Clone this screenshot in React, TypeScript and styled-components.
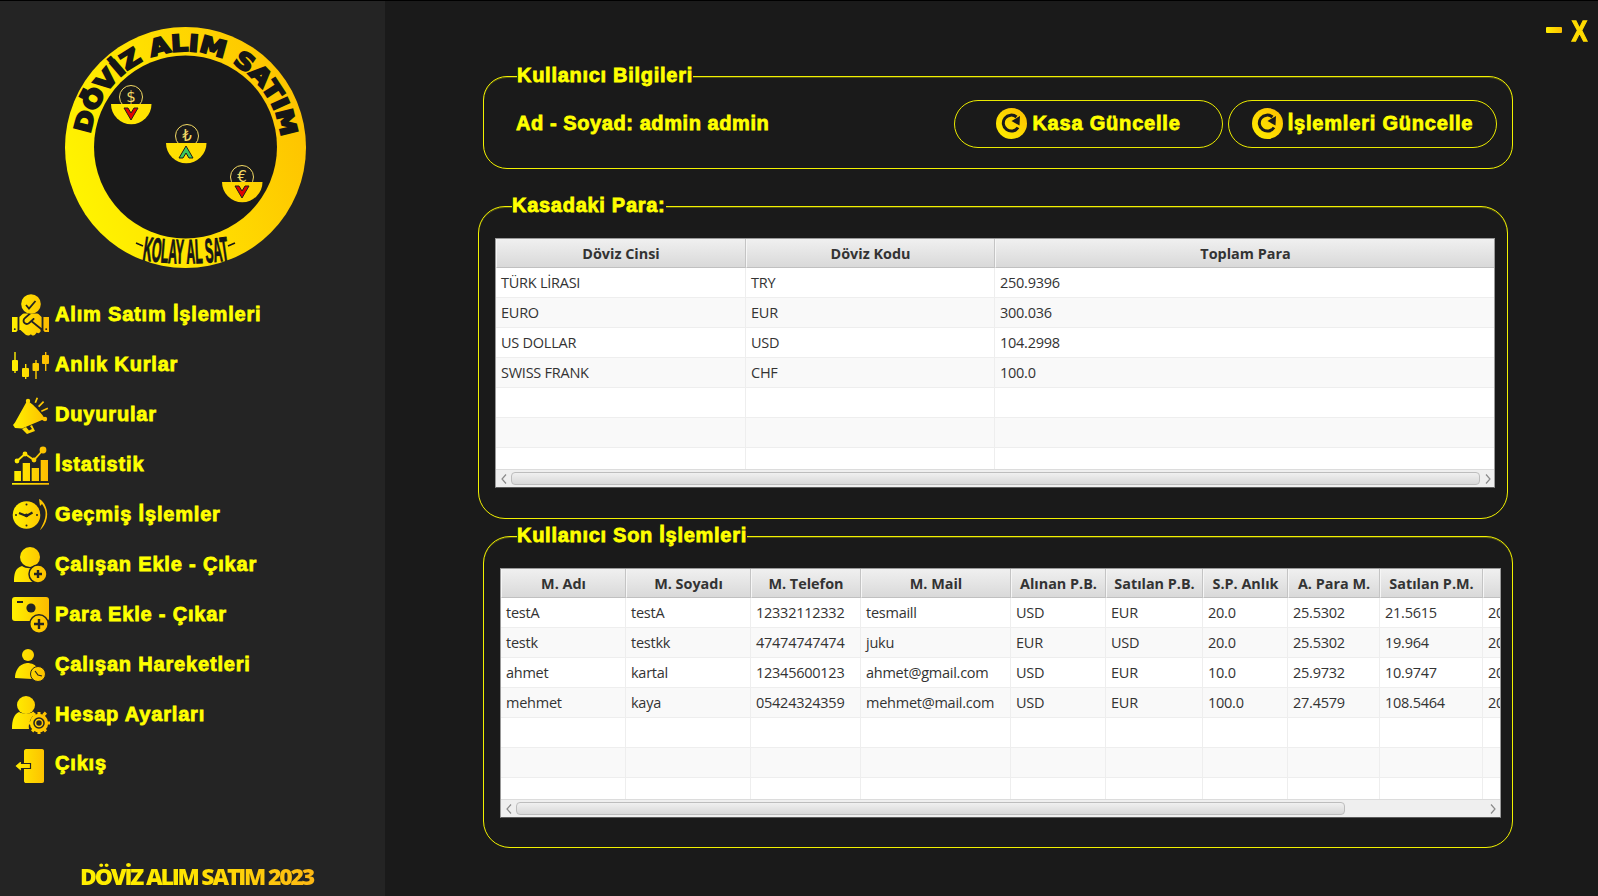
import React from "react";
import styled, { createGlobalStyle } from "styled-components";
import { FaHandshake } from "react-icons/fa";

const Global = createGlobalStyle`
  html, body { margin: 0; padding: 0; width: 1598px; height: 896px; overflow: hidden; background: #1a1a1a; }
  #root { width: 1598px; height: 896px; }
  * { box-sizing: border-box; }
`;

const HEAVY = `"Liberation Sans", Arial, sans-serif`;
const UI = `"Open Sans", "Noto Sans", sans-serif`;
const YELLOW = "#ffff00";

const Shell = styled.div`
  display: flex;
  width: 1598px;
  height: 896px;
  border-top: 1px solid #000;
  background: #1a1a1a;
`;
const Sidebar = styled.aside`
  width: 385px;
  height: 100%;
  flex: none;
  background: #242424;
  padding-top: 26px;
  display: flex;
  flex-direction: column;
`;
const LogoBox = styled.div`
  margin-left: 65px;
  width: 241px;
  height: 241px;
  flex: none;
`;
const Menu = styled.nav`
  margin-top: 22px;
  display: flex;
  flex-direction: column;
`;
const MenuItem = styled.div`
  height: 49.9px;
  display: flex;
  align-items: center;
  padding-left: 12px;
  gap: 6px;
`;
const MenuLabel = styled.span`
  font: bold 20px ${HEAVY};
  letter-spacing: 0.82px;
  color: ${YELLOW};
  -webkit-text-stroke: 0.8px ${YELLOW};
  white-space: nowrap;
`;
const Footer = styled.div`
  margin-top: auto;
  margin-left: 80px;
  margin-bottom: 4px;
  font: 800 23px "Open Sans", sans-serif;
  letter-spacing: -2.2px;
  width: fit-content;
  padding-right: 3px;
  white-space: nowrap;
  background: linear-gradient(90deg, #ffef00 0%, #ffe800 40%, #fdb714 100%);
  -webkit-background-clip: text;
  background-clip: text;
  color: transparent;
`;
const Main = styled.main`
  flex: 1;
  display: flex;
  flex-direction: column;
`;
const TopBar = styled.div`
  height: 75px;
  flex: none;
  display: flex;
  justify-content: flex-end;
  align-items: flex-start;
  padding: 19px 10px 0 0;
  gap: 8px;
`;
const MinimizeGlyph = styled.div`
  width: 16px;
  height: 6px;
  margin-top: 7px;
  border-radius: 1px;
  background: linear-gradient(90deg, #ffee00, #fdbf00);
`;
const CloseGlyph = styled.div`
  font: bold 29px ${HEAVY};
  line-height: 23px;
  width: 18px;
  height: 23px;
  text-align: center;
  color: #ffdc00;
  -webkit-text-stroke: 1.4px #ffdc00;
  transform: scaleX(0.8);
`;
const Panel = styled.section<{ $left: number; $height: number; $top: number; $radius: number }>`
  position: relative;
  width: 1030px;
  height: ${(p) => p.$height}px;
  margin-left: ${(p) => p.$left}px;
  margin-top: ${(p) => p.$top}px;
  flex: none;
  border: 1.5px solid #f2f200;
  box-shadow: inset 0 1px 0 rgba(255,255,0,0.25);
  border-radius: ${(p) => p.$radius}px;
`;
const PanelTitle = styled.h2`
  position: absolute;
  left: 33px;
  top: -13px;
  margin: 0;
  background: #1a1a1a;
  font: bold 20px/22px ${HEAVY};
  letter-spacing: 0.72px;
  color: ${YELLOW};
  -webkit-text-stroke: 0.8px ${YELLOW};
  white-space: nowrap;
`;
const InfoRow = styled.div`
  height: 100%;
  display: flex;
  align-items: center;
  padding: 2px 15px 0 32px;
  gap: 5px;
`;
const UserName = styled.div`
  margin-right: auto;
  font: bold 20px ${HEAVY};
  letter-spacing: 0.58px;
  color: ${YELLOW};
  -webkit-text-stroke: 0.8px ${YELLOW};
  white-space: nowrap;
`;
const ActionButton = styled.button`
  width: 269px;
  height: 48px;
  flex: none;
  border: 1.5px solid #eaea00;
  border-radius: 24px;
  background: transparent;
  display: flex;
  align-items: center;
  justify-content: center;
  gap: 5px;
  padding: 0;
  font: bold 20px ${HEAVY};
  letter-spacing: 0.8px;
  color: ${YELLOW};
  -webkit-text-stroke: 0.8px ${YELLOW};
  white-space: nowrap;
`;
const TableFrame = styled.div<{ $width: number; $mt: number }>`
  width: ${(p) => p.$width}px;
  height: 250px;
  margin: ${(p) => p.$mt}px 0 0 16px;
  background: #fff;
  border: 1px solid #9a9a9a;
  border-bottom-color: #5c5c5c;
  overflow: hidden;
  display: flex;
  flex-direction: column;
`;
const TableBody = styled.div`
  flex: 1;
  height: 230px;
  overflow: hidden;
`;
const DataTable = styled.table`
  table-layout: fixed;
  border-collapse: separate;
  border-spacing: 0;
  font: 14.5px ${UI};
  color: #333;
`;
const HeadCell = styled.th`
  height: 29px;
  padding: 0;
  font: 700 14.4px ${UI};
  color: #333;
  text-align: center;
  background: linear-gradient(#f0f0f0, #d9d9d9);
  border-right: 1px solid #c4c4c4;
  border-left: 1px solid #f6f6f6;
  border-bottom: 1px solid #c0c0c0;
  white-space: nowrap;
  overflow: hidden;
`;
const BodyRow = styled.tr<{ $odd: boolean }>`
  background: ${(p) => (p.$odd ? "#f9f9f9" : "#fff")};
`;
const BodyCell = styled.td`
  height: 30px;
  padding: 0 0 1px 5px;
  letter-spacing: -0.25px;
  border-right: 1px solid #eeeeee;
  border-bottom: 1px solid #eeeeee;
  white-space: nowrap;
  overflow: hidden;
`;
const ScrollBar = styled.div`
  height: 18px;
  flex: none;
  display: flex;
  align-items: center;
  background: #efefef;
  border-top: 1px solid #dcdcdc;
`;
const ScrollArrow = styled.div`
  width: 15px;
  flex: none;
  display: flex;
  justify-content: center;
  align-items: center;
`;
const ScrollTrack = styled.div`
  flex: 1;
  height: 100%;
  display: flex;
  align-items: center;
`;
const ScrollThumb = styled.div`
  height: 13px;
  border: 1px solid #bdbdbd;
  border-radius: 4px;
  background: linear-gradient(#f0f0f0, #d8d8d8);
`;

const Icon: React.FC<{ id: string; children: React.ReactNode }> = ({ id, children }) => (
  <svg width="37" height="44" viewBox="0 0 37 44" style={{ flex: "none", overflow: "visible" }}>
    <defs>
      <linearGradient id={id} gradientUnits="userSpaceOnUse" x1="0" y1="0" x2="37" y2="0">
        <stop offset="0" stopColor="#fff200" />
        <stop offset="1" stopColor="#fdbb00" />
      </linearGradient>
      <linearGradient id={`${id}b`} x1="0" y1="0" x2="1" y2="0">
        <stop offset="0" stopColor="#fff200" />
        <stop offset="1" stopColor="#fdbb00" />
      </linearGradient>
    </defs>
    <g fill={`url(#${id})`} stroke="none">{children}</g>
  </svg>
);

const DARK = "#242424";

const icons: Record<string, React.ReactNode> = {
  handshake: (
    <Icon id="i1">
      <circle cx="19" cy="11" r="9.800" />
      <path d="M14 12l3 3.500 6.500-7.500" stroke={DARK} strokeWidth="1.800" fill="none" />
      <FaHandshake size={37} x={0} y={13} fill="url(#i1b)" />
    </Icon>
  ),
  candles: (
    <Icon id="i2">
      <path d="M2.300 9h1.400v21H2.300z M13 21h1.400v15H13z M23.300 17h1.400v19h-1.400z M33 9h1.400v19H33z" />
      <rect x="0" y="17" width="6" height="11" rx="1" />
      <rect x="10" y="25" width="7" height="9" rx="1" />
      <rect x="20.500" y="20" width="6.500" height="8" rx="1" />
      <rect x="30" y="12" width="7" height="9" rx="1" />
    </Icon>
  ),
  megaphone: (
    <Icon id="i3">
      <path d="M15 8l18 18-3 1-20 8.500-7-.5-2-3 2-2.500z" />
      <path d="M15 8c3 0 15 12 18 18-1 2-2 1-3 1z" />
      <path d="M10 36l5 5 8-3-3-6-2 1 2 3-3 1.600-3-3.600z" />
      <circle cx="16" cy="8" r="2.200" />
      <circle cx="33" cy="26" r="2.200" />
      <path d="M22.500 9.500l2-5 1.600.6-2 5z M26 13l5-5 1.200 1.200-5 5z M29 17.500l6.500-3 .7 1.500-6.500 3z" />
    </Icon>
  ),
  stats: (
    <Icon id="i4">
      <rect x="0" y="40" width="37" height="1.700" />
      <rect x="2.300" y="28" width="6.700" height="10" />
      <rect x="10.700" y="20" width="7.300" height="18" />
      <rect x="19.700" y="25" width="7.300" height="13" />
      <rect x="28.700" y="17" width="7.300" height="21" />
      <path d="M5 18l8-7 9 6 9-10" fill="none" stroke="url(#i4)" strokeWidth="1.800" />
      <circle cx="5" cy="18" r="2.400" />
      <circle cx="13" cy="11" r="2.400" />
      <circle cx="22" cy="17" r="2.400" />
      <circle cx="31" cy="7" r="3.400" />
    </Icon>
  ),
  clock: (
    <Icon id="i5">
      <circle cx="14.500" cy="22" r="13.800" />
      <path d="M7 20l7.500 3 6-3.500" fill="none" stroke={DARK} strokeWidth="2.200" />
      <circle cx="14.500" cy="22.400" r="1.800" fill={DARK} />
      <circle cx="14.500" cy="11.500" r="1" fill={DARK} />
      <circle cx="14.500" cy="32.500" r="1" fill={DARK} />
      <circle cx="4" cy="22" r="1" fill={DARK} />
      <circle cx="25" cy="22" r="1" fill={DARK} />
      <path d="M29 7c5 4 8 13 5 21-1 3-4 8-6 9 3-6 6-11 5.500-18-.3-3-2-6-3.500-8l-2 2-1-7z" />
    </Icon>
  ),
  userAdd: (
    <Icon id="i6">
      <circle cx="18" cy="15" r="10" />
      <path d="M2 40c0-8 1-14 8-16 4 3 11 3 15 0l3 2c-6 1-9 7-7 14z" />
      <circle cx="26" cy="32" r="9" stroke={DARK} strokeWidth="1.500" />
      <path d="M22 32h8M26 28v8" stroke={DARK} strokeWidth="2.400" fill="none" />
    </Icon>
  ),
  money: (
    <Icon id="i7">
      <rect x="0" y="5" width="37" height="24" rx="3" />
      <circle cx="19" cy="16" r="4.600" fill={DARK} />
      <rect x="5" y="9" width="6" height="2" fill={DARK} />
      <circle cx="27" cy="32" r="10" fill={DARK} />
      <circle cx="27" cy="32" r="8.500" />
      <path d="M22 32h10M27 27v10" stroke={DARK} strokeWidth="2.400" fill="none" />
    </Icon>
  ),
  userClock: (
    <Icon id="i8">
      <circle cx="16" cy="13" r="6" />
      <path d="M3 36c0-6 3-14 12-15 5 0 9 2 11 6-5 1-7 5-6 10z" />
      <circle cx="26" cy="32" r="7.500" stroke={DARK} strokeWidth="1" />
      <path d="M23 29l3 4 4 1" fill="none" stroke={DARK} strokeWidth="1.200" />
    </Icon>
  ),
  userGear: (
    <Icon id="i9">
      <circle cx="14" cy="13" r="9" />
      <path d="M0 37c0-9 2-15 7-17 4 2 10 2 14 0l3 2c-5 2-8 9-7 15z" />
      <circle cx="27" cy="31" r="7.500" fill="none" stroke="url(#i9)" strokeWidth="3.400" />
      <circle cx="27" cy="31" r="3.500" fill="none" stroke="url(#i9)" strokeWidth="1.500" />
      <path d="M25.500 20h3v3.500h-3z M25.500 38.500h3v3.500h-3z M16 29.500h3.500v3H16z M34.500 29.500H38v3h-3.500z M19 21.800l2.200-2.200 2.600 2.600-2.200 2.200z M30.300 37.800l2.200-2.200 2.600 2.600-2.200 2.200z M35 21.800l-2.200-2.200-2.600 2.600 2.200 2.200z M23.800 37.800l-2.200-2.200-2.600 2.600 2.200 2.200z" />
    </Icon>
  ),
  exit: (
    <Icon id="i10">
      <path d="M14 7h16c1.500 0 2 1 2 2v30c0 1-.5 2-2 2H14c-1 0-2-.5-2-2V9c0-1 1-2 2-2z" />
      <path d="M2.500 24l7-6v3.500h9v5h-9V30z" stroke={DARK} strokeWidth="1.200" />
    </Icon>
  ),
};

const menu: [string, string][] = [
  ["handshake", "Alım Satım İşlemleri"],
  ["candles", "Anlık Kurlar"],
  ["megaphone", "Duyurular"],
  ["stats", "İstatistik"],
  ["clock", "Geçmiş İşlemler"],
  ["userAdd", "Çalışan Ekle - Çıkar"],
  ["money", "Para Ekle - Çıkar"],
  ["userClock", "Çalışan Hareketleri"],
  ["userGear", "Hesap Ayarları"],
  ["exit", "Çıkış"],
];

const Bowl: React.FC<{ x: number; y: number; coinX: number; coinY: number; sym: string; up?: boolean }> = ({ x, y, coinX, coinY, sym, up }) => (
  <g>
    <circle cx={coinX} cy={coinY} r="11.500" fill="#1a1a1a" stroke="#f2d964" strokeWidth="1" />
    <text x={coinX} y={coinY + 5} textAnchor="middle" fontFamily="DejaVu Sans, sans-serif" fontSize="15" fill="#f2d964">{sym}</text>
    <path d={`M${x} ${y}h40.500a20.250 20.250 0 0 1-40.500 0z`} fill="url(#logoGrad)" />
    {up ? (
      <path transform={`translate(${x + 20} ${y + 3})`} d="M0 0l7 12H3L0 7l-3 5h-4z" fill="#3bc85e" stroke="#1c1c1c" strokeWidth="1" />
    ) : (
      <path transform={`translate(${x + 20} ${y + 4})`} d="M-7 0h4l3 5 3-5h4L0 12z" fill="#e00000" stroke="#1c1c1c" strokeWidth="1" />
    )}
  </g>
);

const Logo: React.FC = () => (
  <svg width="241" height="241" viewBox="0 0 241 241">
    <defs>
      <linearGradient id="logoGrad" gradientUnits="userSpaceOnUse" x1="0" y1="160" x2="241" y2="80">
        <stop offset="0" stopColor="#fff500" />
        <stop offset="0.45" stopColor="#ffe000" />
        <stop offset="1" stopColor="#fec200" />
      </linearGradient>
      <path id="logoTop" d="M25.400 107A96 96 0 0 1 215.600 107" />
      <path id="logoBottom" d="M77 233Q120.500 240 165 233" />
    </defs>
    <circle cx="120.500" cy="120.500" r="120.500" fill="url(#logoGrad)" />
    <circle cx="120.500" cy="120" r="91.500" fill="#1a1a1a" />
    <text fontFamily="DejaVu Sans, sans-serif" fontWeight="bold" fontSize="23" fill="#161616" stroke="#161616" strokeWidth="2">
      <textPath href="#logoTop" textLength="278" lengthAdjust="spacingAndGlyphs">DÖVİZ ALIM SATIM</textPath>
    </text>
    <text fontFamily="Liberation Sans, sans-serif" fontWeight="bold" fontSize="34" fill="#161616" stroke="#161616" strokeWidth="1">
      <textPath href="#logoBottom" textLength="88" lengthAdjust="spacingAndGlyphs">KOLAY AL SAT</textPath>
    </text>
    <path d="M71 216l7 3M163 219l7-3" stroke="#161616" strokeWidth="1.600" fill="none" />
    <Bowl x={46} y={77} coinX={66} coinY={70} sym="$" />
    <Bowl x={101} y={116} coinX={122} coinY={109} sym="₺" up />
    <Bowl x={157} y={155} coinX={177} coinY={150} sym="€" />
  </svg>
);

const RefreshIcon: React.FC<{ id: string }> = ({ id }) => (
  <svg width="31" height="31" viewBox="0 0 31 31" style={{ flex: "none" }}>
    <defs>
      <linearGradient id={id} x1="0" y1="1" x2="1" y2="0">
        <stop offset="0" stopColor="#fff200" />
        <stop offset="1" stopColor="#fcbc00" />
      </linearGradient>
    </defs>
    <circle cx="15.500" cy="15.500" r="15.500" fill={`url(#${id})`} />
    <path d="M22 19.500A8 8 0 1 1 20.500 9" fill="none" stroke="#1a1a1a" strokeWidth="3" />
    <path d="M24 8l-.5 9.500-8-4.500z" fill="#1a1a1a" />
  </svg>
);

type ColumnDef = { title: string; width: number };

const Grid: React.FC<{ columns: ColumnDef[]; rows: string[][] }> = ({ columns, rows }) => {
  const blank = Array.from({ length: 7 - rows.length }, () => columns.map(() => ""));
  return (
    <TableBody>
      <DataTable style={{ width: columns.reduce((s, c) => s + c.width, 0) }}>
        <colgroup>
          {columns.map((c, i) => (
            <col key={i} style={{ width: c.width }} />
          ))}
        </colgroup>
        <thead>
          <tr>
            {columns.map((c, i) => (
              <HeadCell key={i}>{c.title}</HeadCell>
            ))}
          </tr>
        </thead>
        <tbody>
          {[...rows, ...blank].map((r, i) => (
            <BodyRow key={i} $odd={i % 2 === 1}>
              {r.map((v, j) => (
                <BodyCell key={j}>{v}</BodyCell>
              ))}
            </BodyRow>
          ))}
        </tbody>
      </DataTable>
    </TableBody>
  );
};

const Scroll: React.FC<{ thumb: number }> = ({ thumb }) => (
  <ScrollBar>
    <ScrollArrow>
      <svg width="6" height="10" viewBox="0 0 6 10"><path d="M5 .5L1 5l4 4.500" fill="none" stroke="#8a8a8a" strokeWidth="1.200" /></svg>
    </ScrollArrow>
    <ScrollTrack>
      <ScrollThumb style={{ width: thumb }} />
    </ScrollTrack>
    <ScrollArrow>
      <svg width="6" height="10" viewBox="0 0 6 10"><path d="M1 .5L5 5 1 9.500" fill="none" stroke="#8a8a8a" strokeWidth="1.200" /></svg>
    </ScrollArrow>
  </ScrollBar>
);

const kasaCols: ColumnDef[] = [
  { title: "Döviz Cinsi", width: 250 },
  { title: "Döviz Kodu", width: 249 },
  { title: "Toplam Para", width: 501 },
];
const kasaRows = [
  ["TÜRK LİRASI", "TRY", "250.9396"],
  ["EURO", "EUR", "300.036"],
  ["US DOLLAR", "USD", "104.2998"],
  ["SWISS FRANK", "CHF", "100.0"],
];
const logCols: ColumnDef[] = [
  { title: "M. Adı", width: 125 },
  { title: "M. Soyadı", width: 125 },
  { title: "M. Telefon", width: 110 },
  { title: "M. Mail", width: 150 },
  { title: "Alınan P.B.", width: 95 },
  { title: "Satılan P.B.", width: 97 },
  { title: "S.P. Anlık", width: 85 },
  { title: "A. Para M.", width: 92 },
  { title: "Satılan P.M.", width: 103 },
  { title: "", width: 40 },
];
const logRows = [
  ["testA", "testA", "12332112332", "tesmaill", "USD", "EUR", "20.0", "25.5302", "21.5615", "2023"],
  ["testk", "testkk", "47474747474", "juku", "EUR", "USD", "20.0", "25.5302", "19.964", "2023"],
  ["ahmet", "kartal", "12345600123", "ahmet@gmail.com", "USD", "EUR", "10.0", "25.9732", "10.9747", "2023"],
  ["mehmet", "kaya", "05424324359", "mehmet@mail.com", "USD", "EUR", "100.0", "27.4579", "108.5464", "2023"],
];

export default function App() {
  return (
    <Shell>
      <Global />
      <Sidebar>
        <LogoBox>
          <Logo />
        </LogoBox>
        <Menu>
          {menu.map(([icon, label]) => (
            <MenuItem key={label}>
              {icons[icon]}
              <MenuLabel>{label}</MenuLabel>
            </MenuItem>
          ))}
        </Menu>
        <Footer>DÖVİZ ALIM SATIM 2023</Footer>
      </Sidebar>
      <Main>
        <TopBar>
          <MinimizeGlyph />
          <CloseGlyph>X</CloseGlyph>
        </TopBar>
        <Panel $left={98} $top={0} $height={93} $radius={24}>
          <PanelTitle>Kullanıcı Bilgileri</PanelTitle>
          <InfoRow>
            <UserName>Ad - Soyad: admin admin</UserName>
            <ActionButton><RefreshIcon id="r1" />Kasa Güncelle</ActionButton>
            <ActionButton><RefreshIcon id="r2" />İşlemleri Güncelle</ActionButton>
          </InfoRow>
        </Panel>
        <Panel $left={93} $top={37} $height={313} $radius={27}>
          <PanelTitle>Kasadaki Para:</PanelTitle>
          <TableFrame $width={1000} $mt={31}>
            <Grid columns={kasaCols} rows={kasaRows} />
            <Scroll thumb={969} />
          </TableFrame>
        </Panel>
        <Panel $left={98} $top={17} $height={312} $radius={27}>
          <PanelTitle>Kullanıcı Son İşlemleri</PanelTitle>
          <TableFrame $width={1001} $mt={31}>
            <Grid columns={logCols} rows={logRows} />
            <Scroll thumb={829} />
          </TableFrame>
        </Panel>
      </Main>
    </Shell>
  );
}
